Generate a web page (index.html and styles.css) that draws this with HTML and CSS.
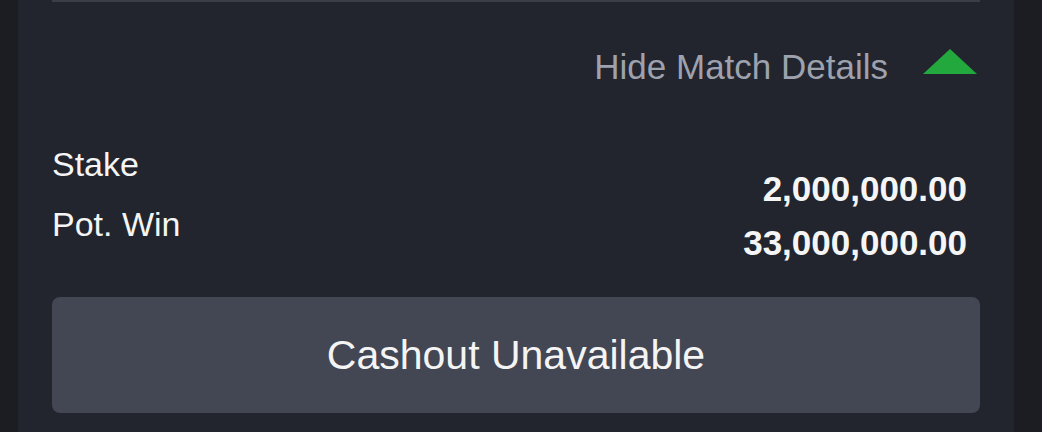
FILE: index.html
```html
<!DOCTYPE html>
<html lang="en">
<head>
<meta charset="utf-8">
<title>Bet details</title>
<link rel="stylesheet" href="styles.css">
</head>
<body>
<div class="card">
  <div class="topline"></div>
  <div class="toggle">
    <span class="toggle-text">Hide Match Details</span>
    <svg class="caret" width="54" height="25" viewBox="0 0 54 25" aria-hidden="true">
      <polygon points="27,0 54,25 0,25" fill="#23a83d"/>
    </svg>
  </div>
  <div class="details">
    <div class="labels">
      <div>Stake</div>
      <div>Pot. Win</div>
    </div>
    <div class="values">
      <div>2,000,000.00</div>
      <div>33,000,000.00</div>
    </div>
  </div>
  <div class="cashout">Cashout Unavailable</div>
</div>
</body>
</html>
```
FILE: styles.css
```css
html, body {
  margin: 0;
  padding: 0;
  height: 100%;
}
body {
  background: #1b1d23;
  font-family: "Liberation Sans", Arial, sans-serif;
  overflow: hidden;
}
.card {
  margin: 0 28px 0 18px;
  height: 432px;
  box-sizing: border-box;
  background: #22252d;
  padding: 0 34px 0 34px;
  display: flex;
  flex-direction: column;
}
.topline {
  height: 2px;
  background: #3b3e47;
}
.toggle {
  margin-top: 45px;
  display: flex;
  justify-content: flex-end;
  align-items: center;
  gap: 35px;
  height: 40px;
  padding-right: 3px;
}
.toggle-text {
  font-size: 35px;
  line-height: 40px;
  color: #9ea2ae;
}
.caret {
  display: block;
  margin-bottom: 12px;
}
.details {
  margin-top: 47px;
  display: flex;
  justify-content: space-between;
  align-items: flex-start;
  color: #f5f5f5;
}
.labels {
  font-size: 34px;
  line-height: 60px;
}
.values {
  margin-top: 28px;
  padding-right: 13px;
  font-size: 35px;
  font-weight: bold;
  line-height: 54px;
  text-align: right;
}
.cashout {
  margin-top: 27px;
  height: 116px;
  border-radius: 8px;
  background: #434653;
  color: #f4f4f4;
  font-size: 41px;
  display: flex;
  align-items: center;
  justify-content: center;
}
```
